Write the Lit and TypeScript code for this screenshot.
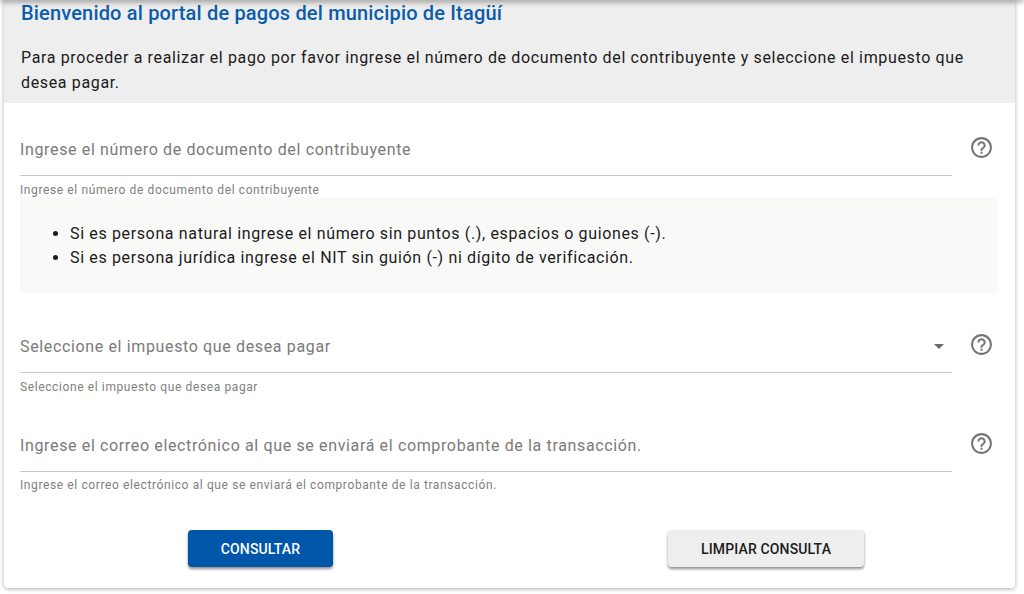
import { LitElement, html, css } from "lit";
import { customElement } from "lit/decorators.js";

const help = html`<svg class="help" viewBox="0 0 24 24" width="25" height="25"><path fill="currentColor" d="M11 18h2v-2h-2v2zm1-16C6.48 2 2 6.48 2 12s4.48 10 10 10 10-4.48 10-10S17.52 2 12 2zm0 18c-4.41 0-8-3.59-8-8s3.59-8 8-8 8 3.59 8 8-3.59 8-8 8zm0-14c-2.21 0-4 1.79-4 4h2c0-1.1.9-2 2-2s2 .9 2 2c0 2-3 1.75-3 5h2c0-2.25 3-2.5 3-5 0-2.21-1.79-4-4-4z"/></svg>`;

@customElement("app-root")
export class AppRoot extends LitElement {
  static styles = css`
    :host { display: block; height: 594px; overflow: hidden; position: relative; background: #fff; font-family: Roboto, sans-serif; }
    .topshadow { position: absolute; left: 0; right: 0; top: -4px; height: 4px; box-shadow: 0 1px 6px rgba(0,0,0,.55); z-index: 2; }
    .card { margin: 0 9px 0 4px; height: 588px; background: #fff; border-radius: 0 0 4px 4px; box-shadow: 0 1px 4px rgba(0,0,0,.32); display: flex; flex-direction: column; }
    .head { background: #eee; height: 103px; padding: 0 17px; box-sizing: border-box; flex: none; }
    h1 { margin: 0; padding-top: 1px; font-size: 20px; line-height: 24px; font-weight: 500; color: #0b5cab; letter-spacing: .17px; }
    .head p { margin: 20px 0 0; font-size: 16px; line-height: 25px; color: #1b1b1b; letter-spacing: .645px; }
    .body { padding: 0 17px 0 16px; display: flex; flex-direction: column; flex: 1; }
    .row { display: flex; }
    .field { width: 932px; flex: none; }
    .input { height: 73px; border-bottom: 1px solid #c8c8c8; box-sizing: border-box; display: flex; align-items: center; justify-content: space-between; padding-top: 20px; font-size: 16px; letter-spacing: .64px; color: #7a7a7a; }
    .hint { font-size: 12px; line-height: 14px; letter-spacing: .61px; color: #808080; margin-top: 7px; }
    .help { color: #757575; margin: 32px 0 0 17px; display: block; flex: none; }
    .note { background: #f9f9f8; width: 978px; height: 96px; box-sizing: border-box; padding-top: 25px; flex: none; }
    ul { margin: 0; padding-left: 50px; font-size: 16px; line-height: 24px; letter-spacing: .64px; color: #1b1b1b; }
    .select .caret { width: 0; height: 0; border: 5px solid transparent; border-top-color: #6d6d6d; border-bottom: 0; margin-right: 8px; }
    .r2 { margin-top: 7px; }
    .r3 { margin-top: 5px; }
    .r3 .hint { margin-top: 6px; }
    .actions { display: flex; margin-top: 38px; }
    button { height: 37px; border: 0; border-radius: 4px; font: 500 14px Roboto, sans-serif; letter-spacing: .15px; box-shadow: 0 2px 3px rgba(0,0,0,.45); padding: 0; }
    .primary { background: #0056a8; color: #fff; width: 145px; margin-left: 168px; }
    .secondary { background: #eee; color: #1b1b1b; width: 196px; margin-left: 335px; }
  `;
  render() {
    return html`<div class="topshadow"></div>
      <div class="card">
        <div class="head">
          <h1>Bienvenido al portal de pagos del municipio de Itagüí</h1>
          <p>Para proceder a realizar el pago por favor ingrese el número de documento del contribuyente y seleccione el impuesto que desea pagar.</p>
        </div>
        <div class="body">
          <div class="row">
            <div class="field">
              <div class="input">Ingrese el número de documento del contribuyente</div>
              <div class="hint">Ingrese el número de documento del contribuyente</div>
            </div>${help}
          </div>
          <div class="note"><ul>
            <li>Si es persona natural ingrese el número sin puntos (.), espacios o guiones (-).</li>
            <li>Si es persona jurídica ingrese el NIT sin guión (-) ni dígito de verificación.</li>
          </ul></div>
          <div class="row r2">
            <div class="field">
              <div class="input select"><span>Seleccione el impuesto que desea pagar</span><span class="caret"></span></div>
              <div class="hint">Seleccione el impuesto que desea pagar</div>
            </div>${help}
          </div>
          <div class="row r3">
            <div class="field">
              <div class="input">Ingrese el correo electrónico al que se enviará el comprobante de la transacción.</div>
              <div class="hint">Ingrese el correo electrónico al que se enviará el comprobante de la transacción.</div>
            </div>${help}
          </div>
          <div class="actions">
            <button class="primary">CONSULTAR</button>
            <button class="secondary">LIMPIAR CONSULTA</button>
          </div>
        </div>
      </div>`;
  }
}
